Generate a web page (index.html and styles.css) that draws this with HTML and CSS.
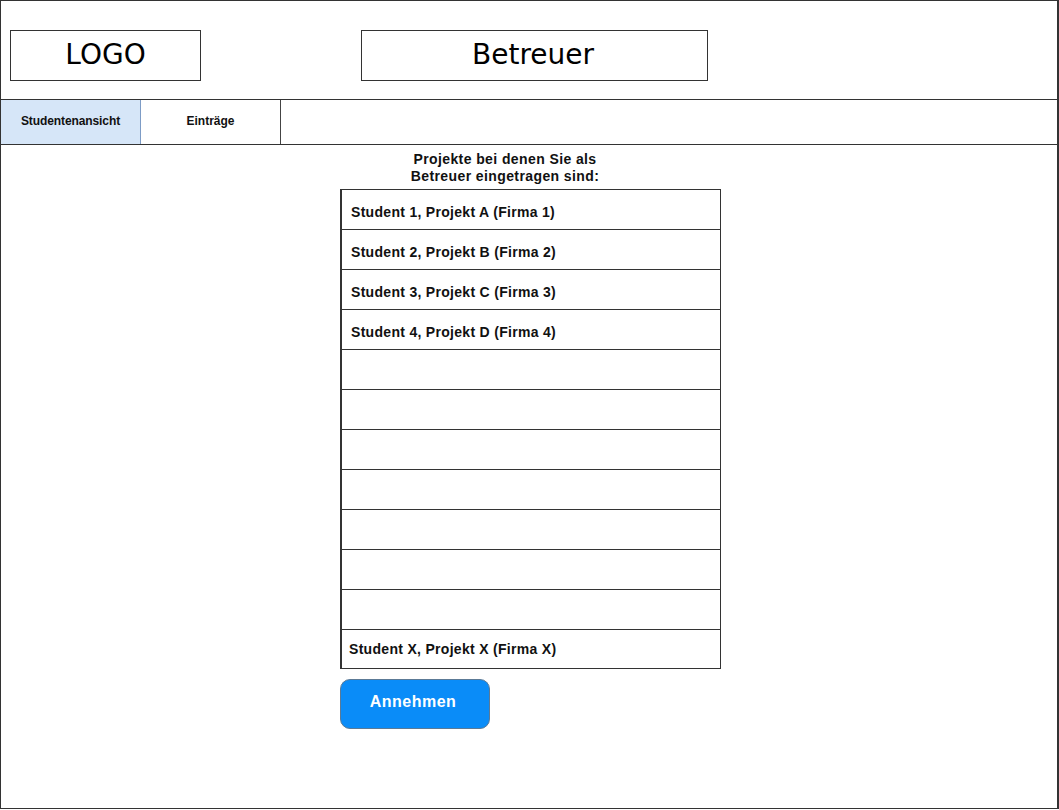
FILE: index.html
```html
<!DOCTYPE html>
<html lang="de">
<head>
    <meta charset="UTF-8">
    <meta name="viewport" content="width=device-width, initial-scale=1.0">
    <title>Betreuer</title>
    <link rel="stylesheet" href="styles.css">
</head>
<body>
    <div class="frame">
        <header class="kopf">
            <div class="logo">LOGO</div>
            <div class="titel">Betreuer</div>
        </header>
        <nav class="tabs">
            <div class="tab aktiv">Studentenansicht</div>
            <div class="tab">Einträge</div>
        </nav>
        <main class="inhalt">
            <h2 class="ueberschrift">Projekte bei denen Sie als<br>Betreuer eingetragen sind:</h2>
            <ul class="liste">
                <li>Student 1, Projekt A (Firma 1)</li>
                <li>Student 2, Projekt B (Firma 2)</li>
                <li>Student 3, Projekt C (Firma 3)</li>
                <li>Student 4, Projekt D (Firma 4)</li>
                <li></li>
                <li></li>
                <li></li>
                <li></li>
                <li></li>
                <li></li>
                <li></li>
                <li class="letzte">Student X, Projekt X (Firma X)</li>
            </ul>
            <button class="boton">Annehmen</button>
        </main>
    </div>
</body>
</html>
```

FILE: styles.css
```css
/* Allgemein */
body {
    margin: 0;
    font-family: "Liberation Sans", Arial, sans-serif;
    background-color: white;
    color: #111;
}

.frame {
    width: 1059px;
    height: 809px;
    box-sizing: border-box;
    border: 1px solid #333;
    border-right-width: 2px;
}

/* Kopfbereich */
.kopf {
    display: flex;
    align-items: flex-start;
    height: 99px;
    padding: 29px 0 0 9px;
    box-sizing: border-box;
    border-bottom: 1px solid #333;
}

.logo,
.titel {
    height: 51px;
    box-sizing: border-box;
    border: 1px solid #333;
    display: flex;
    justify-content: center;
    align-items: center;
    padding-bottom: 2px;
    font-family: "DejaVu Sans", sans-serif;
    font-size: 28px;
    color: #000;
}

.logo {
    width: 191px;
}

.titel {
    width: 347px;
    margin-left: 160px;
    padding-right: 3px;
}

/* Reiter */
.tabs {
    display: flex;
    height: 44px;
    border-bottom: 1px solid #333;
}

.tab {
    width: 140px;
    display: flex;
    justify-content: center;
    align-items: center;
    font-size: 12px;
    font-weight: bold;
    border-right: 1px solid #444;
    padding-bottom: 2px;
    box-sizing: border-box;
}

.tab.aktiv {
    background-color: #d6e6f8;
    border-right-color: #7d9cc6;
    letter-spacing: -0.1px;
}

/* Inhalt */
.inhalt {
    padding-left: 339px;
}

.ueberschrift {
    width: 330px;
    margin: 0;
    padding-top: 6px;
    text-align: center;
    font-size: 14px;
    line-height: 17px;
    font-weight: bold;
    letter-spacing: 0.4px;
}

.liste {
    list-style-type: none;
    margin: 4px 0 0 0;
    padding: 0;
    width: 381px;
    box-sizing: border-box;
    border: 1px solid #333;
    border-left-width: 2px;
}

.liste li {
    height: 40px;
    box-sizing: border-box;
    border-bottom: 1px solid #333;
    padding: 5px 0 0 9px;
    display: flex;
    align-items: center;
    font-size: 14px;
    font-weight: bold;
    letter-spacing: 0.3px;
}

.liste li.letzte {
    border-bottom: none;
    height: 38px;
    padding: 0 0 0 7px;
}

button.boton {
    margin-top: 10px;
    width: 150px;
    height: 50px;
    background-color: #0a8cf8;
    color: white;
    border: 1px solid #5c7a96;
    border-radius: 10px;
    font-family: "Liberation Sans", Arial, sans-serif;
    font-size: 16px;
    font-weight: bold;
    letter-spacing: 0.5px;
    padding: 0 4px 4px 0;
    cursor: pointer;
}
```
